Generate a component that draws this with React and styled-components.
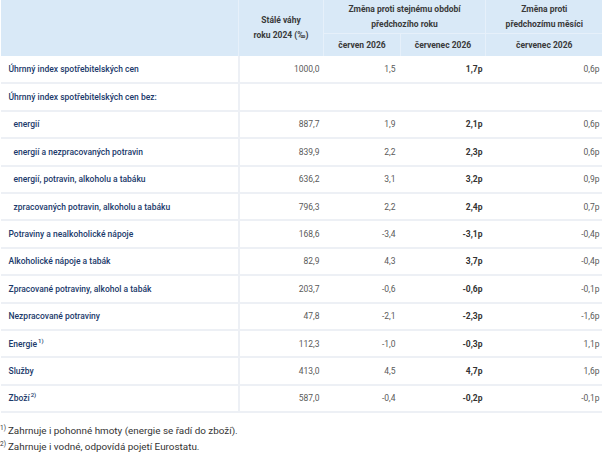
import React from "react";
import styled, { createGlobalStyle } from "styled-components";

const GlobalStyle = createGlobalStyle`
  html, body {
    margin: 0;
    padding: 0;
    background: #ffffff;
  }
  body {
    font-family: Roboto, "Noto Sans", "Liberation Sans", sans-serif;
  }
`;

const rows = [
  { label: "Úhrnný index spotřebitelských cen", w: "1000,0", a: "1,5", b: "1,7p", c: "0,6p" },
  { label: "Úhrnný index spotřebitelských cen bez:" },
  { label: "energií", sub: true, w: "887,7", a: "1,9", b: "2,1p", c: "0,6p" },
  { label: "energií a nezpracovaných potravin", sub: true, w: "839,9", a: "2,2", b: "2,3p", c: "0,6p" },
  { label: "energií, potravin, alkoholu a tabáku", sub: true, w: "636,2", a: "3,1", b: "3,2p", c: "0,9p" },
  { label: "zpracovaných potravin, alkoholu a tabáku", sub: true, w: "796,3", a: "2,2", b: "2,4p", c: "0,7p" },
  { label: "Potraviny a nealkoholické nápoje", w: "168,6", a: "-3,4", b: "-3,1p", c: "-0,4p" },
  { label: "Alkoholické nápoje a tabák", w: "82,9", a: "4,3", b: "3,7p", c: "-0,4p" },
  { label: "Zpracované potraviny, alkohol a tabák", w: "203,7", a: "-0,6", b: "-0,6p", c: "-0,1p" },
  { label: "Nezpracované potraviny", w: "47,8", a: "-2,1", b: "-2,3p", c: "-1,6p" },
  { label: "Energie", note: "1)", w: "112,3", a: "-1,0", b: "-0,3p", c: "1,1p" },
  { label: "Služby", w: "413,0", a: "4,5", b: "4,7p", c: "1,6p" },
  { label: "Zboží", note: "2)", w: "587,0", a: "-0,4", b: "-0,2p", c: "-0,1p" },
];

const Page = styled.div`
  width: 602px;
`;

const Table = styled.table`
  width: 602px;
  border-collapse: collapse;
  table-layout: fixed;
`;

const HeadCell = styled.th`
  background: #d9e9f7;
  color: #3a3a3a;
  font-size: 8.5px;
  font-weight: 700;
  line-height: 15px;
  text-align: center;
  vertical-align: middle;
  padding: 0 4px;
  height: ${(p) => p.$h || 22}px;
  border-left: 1px solid ${(p) => (p.$first ? "transparent" : "#e6f0fa")};
  border-bottom: ${(p) => (p.$split ? "1px solid #e6f0fa" : "none")};
`;

const Row = styled.tr`
  height: 27.4px;
  border-bottom: 2px solid #edf0f5;
`;

const Label = styled.td`
  color: #1b3a6b;
  font-size: 8.5px;
  font-weight: 500;
  padding: 0 0 0 ${(p) => (p.$sub ? 13 : 8)}px;
  border-right: 2px solid #edf0f5;
  white-space: nowrap;
`;

const Num = styled.td`
  color: ${(p) => (p.$bold ? "#333333" : "#5a5a5a")};
  font-size: 8.5px;
  font-weight: ${(p) => (p.$bold ? 700 : 400)};
  text-align: right;
  padding: 0 ${(p) => p.$pad || 4}px 0 0;
`;

const Sup = styled.sup`
  font-size: 6px;
  line-height: 0;
  vertical-align: 4px;
  margin-left: 1px;
`;

const Notes = styled.div`
  padding: 10px 0 0 0;
  color: #333333;
  font-size: 9.9px;
  line-height: 16px;
`;

const NoteSup = styled.sup`
  font-size: 6.5px;
  line-height: 0;
  vertical-align: 4px;
  margin-right: 2px;
`;

export default function App() {
  return (
    <Page>
      <GlobalStyle />
      <Table>
        <colgroup>
          <col style={{ width: 238 }} />
          <col style={{ width: 85 }} />
          <col style={{ width: 77 }} />
          <col style={{ width: 85 }} />
          <col style={{ width: 117 }} />
        </colgroup>
        <thead>
          <tr>
            <HeadCell rowSpan={2} $first $h={33} />
            <HeadCell rowSpan={2} $h={33}>
              Stálé váhy
              <br />
              roku 2024 (‰)
            </HeadCell>
            <HeadCell colSpan={2} $h={33} $split>
              Změna proti stejnému období
              <br />
              předchozího roku
            </HeadCell>
            <HeadCell $h={33} $split>
              Změna proti
              <br />
              předchozímu měsíci
            </HeadCell>
          </tr>
          <tr>
            <HeadCell $h={22}>červen 2026</HeadCell>
            <HeadCell $h={22}>červenec 2026</HeadCell>
            <HeadCell $h={22}>červenec 2026</HeadCell>
          </tr>
        </thead>
        <tbody>
          {rows.map((r) => (
            <Row key={r.label}>
              <Label $sub={r.sub}>
                {r.label}
                {r.note && <Sup>{r.note}</Sup>}
              </Label>
              <Num>{r.w}</Num>
              <Num $pad={5}>{r.a}</Num>
              <Num $bold $pad={3}>{r.b}</Num>
              <Num $pad={3}>{r.c}</Num>
            </Row>
          ))}
        </tbody>
      </Table>
      <Notes>
        <div>
          <NoteSup>1)</NoteSup>Zahrnuje i pohonné hmoty (energie se řadí do zboží).
        </div>
        <div>
          <NoteSup>2)</NoteSup>Zahrnuje i vodné, odpovídá pojetí Eurostatu.
        </div>
      </Notes>
    </Page>
  );
}
